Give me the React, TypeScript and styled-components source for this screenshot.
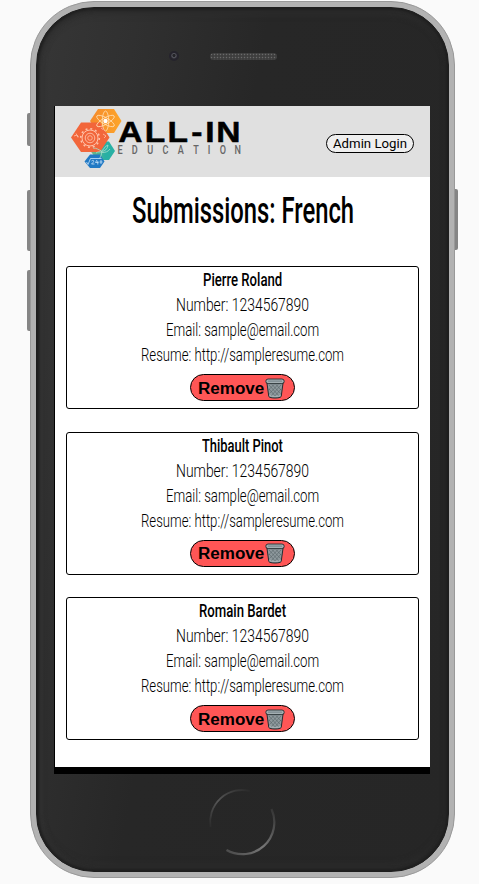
import React, { useLayoutEffect, useRef, useState } from "react";
import styled, { createGlobalStyle, css } from "styled-components";

const GlobalStyle = createGlobalStyle`
  *, *::before, *::after { box-sizing: border-box; }
  body { margin: 0; background: #fafafa; }
`;

const Stage = styled.div`
  height: 884px;
  padding: 1px 0 0 30px;
  overflow: hidden;
  background: #fafafa;
`;

const Phone = styled.div`
  position: relative;
  width: 425px;
  height: 877px;
  padding: 5px;
  border: 1px solid #999;
  border-radius: 64px;
  background: #b2b2b2;
`;

const SideKey = styled.span<{ $side: "left" | "right"; $top: number; $height: number }>`
  position: absolute;
  top: ${(p) => p.$top}px;
  ${(p) => (p.$side === "left" ? "left: -4px; border-radius: 2px 0 0 2px;" : "right: -4px; border-radius: 0 2px 2px 0;")}
  width: 3px;
  height: ${(p) => p.$height}px;
  background: #858585;
`;

const Face = styled.div`
  display: flex;
  flex-direction: column;
  height: 865px;
  padding: 0 20px 0 17px;
  border: 1px solid #1e1e1e;
  border-radius: 58px;
  background: linear-gradient(100deg, #363636 0, #303030 100px, #272727 230px, #262626 100%);
  box-shadow: inset 0 0 3px 2px #1e1e1e, inset 5px 0 5px #343434, inset 0 6px 6px #2d2d2d,
    inset 0 -6px 7px #2c2c2c;
`;

const TopBezel = styled.div`
  display: flex;
  align-items: center;
  flex: 0 0 98px;
  padding: 0 0 2px 115px;
`;

const Camera = styled.span`
  width: 10px;
  height: 10px;
  border: 2px solid #25232c;
  border-radius: 50%;
  background: radial-gradient(circle at 50% 40%, #242428 0 1.2px, #56565f 2px, #2b2a31 3.5px);
`;

const Speaker = styled.span`
  width: 67px;
  height: 7px;
  margin-left: 30.5px;
  border-radius: 4px;
  background-color: #454545;
  background-image: radial-gradient(#6a6a6a 0.6px, transparent 1px), radial-gradient(#292929 0.5px, transparent 0.9px);
  background-size: 3px 3px;
  background-position: 0 0, 1.5px 1.5px;
`;

const Display = styled.div`
  flex: 0 0 668px;
  width: 376px;
  padding-left: 1px;
  background: #000;
`;

const Screen = styled.main`
  height: 661px;
  background: #fff;
  color: #000;
`;

const Header = styled.header`
  display: flex;
  justify-content: space-between;
  height: 71px;
  padding: 1px 16px 0 15px;
  background: #e0e0e0;
`;

const LogoArt = styled.svg`
  width: 176px;
  height: 64px;
`;

const LoginButton = styled.button`
  width: 88px;
  height: 19px;
  margin-top: 27px;
  padding: 0;
  border: 1px solid #000;
  border-radius: 10px;
  background: #efefef;
  color: #000;
  font: 13.4px/17px Roboto, sans-serif;
`;

const Title = styled.h1`
  height: 89px;
  margin: 0;
  padding-top: 10px;
  font: 500 36px/48px Roboto, sans-serif;
  text-align: center;
`;

const CardList = styled.section`
  display: grid;
  gap: 22.5px;
  padding: 0 11px;
`;

const Card = styled.article`
  display: flex;
  flex-direction: column;
  align-items: center;
  height: 143px;
  border: 1px solid #000;
  border-radius: 3px;
`;

const Line = styled.p<{ $strong?: boolean }>`
  height: 25px;
  margin: 0;
  font-family: Roboto, sans-serif;
  font-size: 18px;
  line-height: 25px;
  ${(p) =>
    p.$strong
      ? css`
          font-weight: 550;
        `
      : css`
          font-weight: 330;
        `}
`;

const RemoveButton = styled.button`
  display: flex;
  align-items: center;
  width: 105px;
  height: 27px;
  margin-top: 7px;
  padding: 1px 0 0 7px;
  border: 1px solid #000;
  border-radius: 14px;
  background: #ff5656;
  color: #000;
  font: bold 16px/25px "Liberation Sans", Arial, sans-serif;
`;

const BinArt = styled.svg`
  width: 20px;
  height: 21px;
  margin-left: 1px;
`;

const BottomBezel = styled.div`
  display: flex;
  justify-content: center;
  padding: 14px 0 0 1px;
`;

const HomeArt = styled.svg`
  width: 68px;
  height: 68px;
`;

const FitBox = styled.span`
  display: inline-block;
  text-align: left;
  white-space: nowrap;
`;

const FitInner = styled.span`
  display: inline-block;
  transform-origin: 0 50%;
`;

/* Condenses or widens a line of text so that it spans the given width. */
function Fit({ width, children }: { width: number; children: React.ReactNode }) {
  const ref = useRef<HTMLSpanElement>(null);
  const [scale, setScale] = useState(1);
  useLayoutEffect(() => {
    if (ref.current) setScale(width / ref.current.offsetWidth);
  }, [width, children]);
  return (
    <FitBox style={{ width }}>
      <FitInner ref={ref} style={{ transform: `scaleX(${scale})` }}>
        {children}
      </FitInner>
    </FitBox>
  );
}

function Logo() {
  return (
    <LogoArt viewBox="70 107 176 64" role="img" aria-label="All-In Education">
      <defs>
        <linearGradient id="teal" x1="0" x2="1">
          <stop offset="0" stopColor="#7bb47f" />
          <stop offset="0.6" stopColor="#28b0a4" />
        </linearGradient>
        <linearGradient id="amber" x1="0" x2="1">
          <stop offset="0" stopColor="#f58a2c" />
          <stop offset="1" stopColor="#fda52a" />
        </linearGradient>
      </defs>
      <path d="M98 109h16l7.5 12-7.5 12H98l-8-12z" fill="url(#amber)" />
      <path d="M97 141.5h12l6 9.500-6 9H97l-6.500-9z" fill="url(#teal)" />
      <path d="M81 122.500h19l9.500 15-9.500 14.500H81l-10-14.500z" fill="#f2663b" />
      <path d="M90 154.500h10l4.500 7-4.500 6.500H90l-5.500-6.500z" fill="#2179c4" />
      <g fill="none" stroke="#ffe0b5" strokeWidth="0.8">
        <ellipse cx="105.500" cy="121" rx="3.200" ry="10" />
        <ellipse cx="105.500" cy="121" rx="3.200" ry="10" transform="rotate(60 105.500 121)" />
        <ellipse cx="105.500" cy="121" rx="3.200" ry="10" transform="rotate(-60 105.500 121)" />
      </g>
      <circle cx="105.500" cy="121" r="2.200" fill="#fff" />
      <g fill="none" stroke="#ffc3aa">
        <circle cx="90" cy="138" r="8" strokeWidth="1" />
        <circle cx="90" cy="138" r="9.300" strokeWidth="1.600" strokeDasharray="2 2.870" />
        <circle cx="90" cy="138" r="4.800" strokeWidth="0.9" />
        <circle cx="90" cy="138" r="2.300" strokeWidth="0.8" />
        <path d="M74 136l3-1 1.500 2M76 133.500l2 4M103 134l3 2-2 2M101 128l2 1.500" strokeWidth="0.8" />
      </g>
      <path
        d="M93 148c4 0 6 2 8.500 3 2.500-1 3-5 6.500-6-.5 4-2.500 6-6.500 6.500M101.500 151c.5 3-.5 5-2 7.500M96 153c2-1.500 4-1.500 5.500-.5M110 149c-2 3-5 3.500-8 3.500"
        fill="none"
        stroke="#a9dfcd"
        strokeWidth="0.8"
      />
      <path
        d="M86.500 162l1.500 2.500 2.500-6h11M91.500 161c2-1.500 3 0 1.500 1.500l-1.500 1.500h3M97 160l-1.500 2.500h3M97.800 161v3.500M101 160v4M99.500 162h3"
        fill="none"
        stroke="#c9e3fa"
        strokeWidth="0.8"
      />
      <g transform="translate(118 142) scale(1.12 1)">
        <text
          x="0.200 24 44.200 65.400 78 87.800"
          y="0"
          fontFamily="Liberation Sans, Arial, sans-serif"
          fontWeight="700"
          fontSize="30"
          stroke="#000"
          strokeWidth="0.500"
        >
          ALL-IN
        </text>
      </g>
      <g transform="translate(117.500 154) scale(0.7 1)">
        <text
          x="0 20.400 42.400 64.300 86.200 108.100 129 146.100 167.100"
          y="0"
          fontFamily="Roboto, sans-serif"
          fontSize="13"
          fontWeight="500"
          fill="#666"
        >
          EDUCATION
        </text>
      </g>
    </LogoArt>
  );
}

function Bin() {
  return (
    <BinArt viewBox="0 0 20 21" aria-hidden="true">
      <path d="M1.800 4l2 14.500c.8 2 11.600 2 12.400 0L18.200 4z" fill="#8e999d" stroke="#222c30" strokeWidth="1" />
      <path
        d="M4 7l10 11M7 6.500l8.500 9M11 6.500l5.500 6M4 11l7 8M16 7L6 18M13 6.500L4.500 15.500M9 6.500L3.500 12M16 11l-7 8"
        stroke="#4c585d"
        strokeWidth="0.500"
        fill="none"
      />
      <path d="M4.500 17.500c2 1.200 9 1.200 11 0" stroke="#acb6b9" strokeWidth="1" fill="none" />
      <rect x="0.800" y="1" width="18.400" height="4.600" rx="2.300" fill="#a4afb3" stroke="#222c30" strokeWidth="0.900" />
      <path d="M3.500 3.200h13" stroke="#7b898f" strokeWidth="1.300" strokeLinecap="round" />
    </BinArt>
  );
}

function HomeButton() {
  return (
    <HomeArt viewBox="0 0 68 68" aria-hidden="true">
      <defs>
        <linearGradient id="arcTop" x1="0" y1="1" x2="1" y2="0">
          <stop offset="0" stopColor="#2b2b2b" />
          <stop offset="0.450" stopColor="#565656" />
          <stop offset="1" stopColor="#292929" />
        </linearGradient>
        <linearGradient id="arcBottom" x1="0" y1="1" x2="1" y2="0">
          <stop offset="0" stopColor="#484848" />
          <stop offset="0.450" stopColor="#777" />
          <stop offset="1" stopColor="#333" />
        </linearGradient>
      </defs>
      <path d="M2.500 39A32 32 0 0 1 42 3" fill="none" stroke="url(#arcTop)" strokeWidth="1.800" />
      <path d="M63.500 21A32 32 0 0 1 18.500 62" fill="none" stroke="url(#arcBottom)" strokeWidth="2.200" />
    </HomeArt>
  );
}

const people = [
  { name: "Pierre Roland", width: 79 },
  { name: "Thibault Pinot", width: 81 },
  { name: "Romain Bardet", width: 87 },
];

export default function App() {
  return (
    <Stage>
      <GlobalStyle />
      <Phone>
        <SideKey $side="left" $top={111} $height={33} />
        <SideKey $side="left" $top={188} $height={61} />
        <SideKey $side="left" $top={268} $height={61} />
        <SideKey $side="right" $top={187} $height={61} />
        <Face>
          <TopBezel>
            <Camera />
            <Speaker />
          </TopBezel>
          <Display>
            <Screen>
              <Header>
                <Logo />
                <LoginButton>
                  <Fit width={74}>Admin Login</Fit>
                </LoginButton>
              </Header>
              <Title>
                <Fit width={222}>Submissions: French</Fit>
              </Title>
              <CardList>
                {people.map((person) => (
                  <Card key={person.name}>
                    <Line $strong>
                      <Fit width={person.width}>{person.name}</Fit>
                    </Line>
                    <Line>
                      <Fit width={133}>Number: 1234567890</Fit>
                    </Line>
                    <Line>
                      <Fit width={153}>Email: sample@email.com</Fit>
                    </Line>
                    <Line>
                      <Fit width={203}>Resume: http://sampleresume.com</Fit>
                    </Line>
                    <RemoveButton>
                      <Fit width={66}>Remove</Fit>
                      <Bin />
                    </RemoveButton>
                  </Card>
                ))}
              </CardList>
            </Screen>
          </Display>
          <BottomBezel>
            <HomeButton />
          </BottomBezel>
        </Face>
      </Phone>
    </Stage>
  );
}
